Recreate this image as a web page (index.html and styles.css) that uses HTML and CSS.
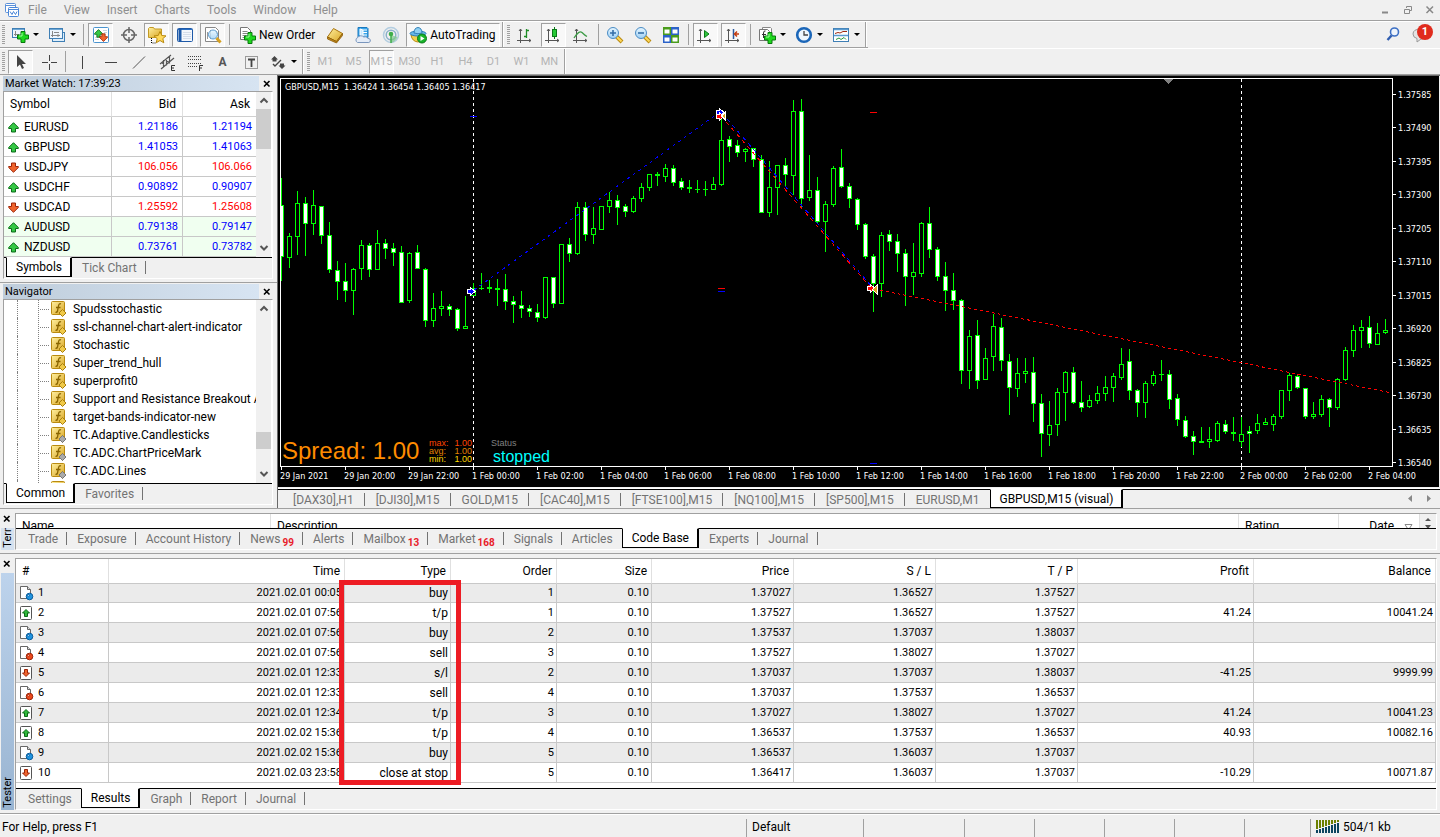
FILE: index.html
```html
<!DOCTYPE html>
<html lang="en">
  <head>
    <meta charset="UTF-8" />
    <meta name="viewport" content="width=device-width, initial-scale=1.0" />
    <title>GBPUSD,M15 (visual)</title>
    <link rel="stylesheet" href="styles.css">
  </head>
  <body>
    <!-- shared icons -->
    <svg class="sprite" width="0" height="0" aria-hidden="true">
      <defs>
        <linearGradient id="g-green" x1="0" y1="0" x2="0" y2="1"><stop offset="0" stop-color="#7dff7d" /><stop offset="1" stop-color="#0ca80c" /></linearGradient>
        <linearGradient id="g-gold" x1="0" y1="0" x2="1" y2="1"><stop offset="0" stop-color="#fff0a0" /><stop offset="1" stop-color="#d8a422" /></linearGradient>
        <linearGradient id="g-lens" x1="0" y1="0" x2="0" y2="1"><stop offset="0" stop-color="#e6f6ff" /><stop offset="1" stop-color="#9fd0f5" /></linearGradient>
      </defs>
      <symbol id="plus" viewBox="0 0 12 12"><path d="M4 .5h4v3.500h3.500v4h-3.500v3.500h-4v-3.500h-3.500v-4h3.500z" fill="#1fd81f" stroke="#08780d" /><path d="M5 2v3h-3" fill="none" stroke="#9dff9d" /></symbol>
      <symbol id="up" viewBox="0 0 11 11"><path d="M5.500 .7L10.300 5.500V6.500H7.500V10H3.500V6.500H.7V5.500z" fill="#35c845" stroke="#0a6b18" /></symbol>
      <symbol id="down" viewBox="0 0 11 11"><path d="M5.500 10.300L10.300 5.500V4.500H7.500V1H3.500V4.500H.7V5.500z" fill="#f0642c" stroke="#9c2408" /></symbol>
      <symbol id="fx" viewBox="0 0 16 16">
        <rect x=".5" y=".5" width="13" height="13" rx="1" fill="url(#g-gold)" stroke="#b98a10" />
        <path d="M10 3q-2-1-2.500 2l-1 5q-.3 1.500-2 1.300M5 6.500h4.500" fill="none" stroke="#8a6500" stroke-width="1.300" />
        <path class="gem" d="M11.500 8.500l3.500 3.500-3.500 3.500L8 12z" />
      </symbol>
      <symbol id="doc" viewBox="0 0 15 16">
        <path d="M1.500 1.500h7l3 3v9h-10z" fill="#fff" stroke="#666" /><path d="M8.500 1.500v3h3" fill="#ddd" stroke="#666" />
        <circle class="ball" cx="10.500" cy="11.500" r="3.300" /><circle cx="9.500" cy="10.500" r="1" fill="#fff" opacity=".6" />
      </symbol>
      <symbol id="box-up" viewBox="0 0 15 16"><rect x="1.500" y="1.500" width="11" height="13" rx="1" fill="#fff" stroke="#555" /><path d="M7 4.500l3.500 3.500H8.500v3.500h-3V8H3.500z" fill="#2fb83a" stroke="#0a6b18" /></symbol>
      <symbol id="box-down" viewBox="0 0 15 16"><rect x="1.500" y="1.500" width="11" height="13" rx="1" fill="#fff" stroke="#555" /><path d="M7 11.500L3.500 8h2V4.500h3V8h2z" fill="#f0642c" stroke="#9c2408" /></symbol>
      <symbol id="axes" viewBox="0 0 18 18"><path d="M4.500 3v14M1 14.500h14M3 5l1.500-2L6 5M13 13l2 1.500L13 16" fill="none" stroke="#555" /></symbol>
      <symbol id="x" viewBox="0 0 8 8"><path d="M1 1l5.500 5.500M6.500 1L1 6.500" stroke="#000" stroke-width="1.600" /></symbol>
      <symbol id="chev-up" viewBox="0 0 10 10"><path d="M1.500 6.500L5 3l3.500 3.500" fill="none" stroke="#555" stroke-width="2" /></symbol>
      <symbol id="chev-down" viewBox="0 0 10 10"><path d="M1.500 3L5 6.500 8.500 3" fill="none" stroke="#555" stroke-width="2" /></symbol>
    </svg>

    <header class="menubar">
      <svg class="logo" width="16" height="16" viewBox="0 0 16 16"><rect x="1.500" y="1.500" width="10" height="9" rx="1" fill="#fff" stroke="#5a8fd8" /><path d="M1 3.500h11" stroke="#5a8fd8" /><rect x="4.500" y="5.500" width="10" height="9" rx="1" fill="#fff" stroke="#4a86d8" /><path d="M4 7.500h11M6 9.500l2 3 1.500-3 2 3 1.500-3" fill="none" stroke="#4a86d8" /></svg>
      <nav class="menu">
        <button>File</button><button>View</button><button>Insert</button><button>Charts</button><button>Tools</button><button>Window</button><button>Help</button>
      </nav>
      <div class="window-buttons">
        <button aria-label="Minimize"><svg width="10" height="10" viewBox="0 0 10 10"><path d="M1 7.500h6" stroke="#888" stroke-width="2" /></svg></button>
        <button aria-label="Restore"><svg width="10" height="10" viewBox="0 0 10 10"><path d="M3.500 3V1.500h5v4H7M1.500 4.500h5v4h-5z" fill="none" stroke="#888" /></svg></button>
        <button aria-label="Close"><svg width="10" height="10" viewBox="0 0 10 10"><path d="M1.500 1.500l6.500 6.500M8 1.500L1.500 8" stroke="#888" stroke-width="1.500" /></svg></button>
      </div>
    </header>

    <div class="toolbar-row">
      <div class="toolbar">
        <span class="grip"></span>
        <button class="tool drop" aria-label="New chart"><svg width="18" height="18" viewBox="0 0 18 18"><rect x="1.500" y="2.500" width="12" height="9" fill="#eef6fd" stroke="#3f7fb5" /><path d="M2 3.500h11" stroke="#6fa8d6" /><path d="M4.500 5v5M3 8.500h5" stroke="#888" /><use href="#plus" x="6" y="5" width="12" height="12" /></svg><i></i></button>
        <button class="tool drop" aria-label="Profiles"><svg width="18" height="18" viewBox="0 0 18 18"><rect x="4.500" y="6.500" width="12" height="9" fill="#dfeefa" stroke="#3f7fb5" /><rect x="1.500" y="2.500" width="13" height="10" fill="#eef6fd" stroke="#3f7fb5" /><path d="M2 3.500h12" stroke="#6fa8d6" /><path d="M4.500 5v6M3 9.500h9M10 8v3M6 6.500h5" stroke="#888" /></svg><i></i></button>
        <span class="sep"></span>
        <button class="tool on" aria-label="Market Watch"><svg width="18" height="18" viewBox="0 0 18 18"><rect x="1.500" y="1.500" width="15" height="15" rx="1" fill="#fff" stroke="#4a94cf" /><path d="M11 4.500h4M12 6.500h3M3 11.500h4M3 13.500h4" stroke="#cdd6dd" /><use href="#up" x="2" y="3" width="9" height="9" /><use href="#down" x="7" y="7" width="9" height="9" /></svg></button>
        <button class="tool" aria-label="Data Window"><svg width="18" height="18" viewBox="0 0 18 18"><circle cx="9" cy="9" r="5.500" fill="none" stroke="#666" stroke-width="1.500" /><path d="M9 1v6M9 11v6M1 9h6M11 9h6" stroke="#666" stroke-width="1.500" /></svg></button>
        <button class="tool on" aria-label="Navigator"><svg width="20" height="18" viewBox="0 0 20 18"><path d="M1.500 11.500v-9l1-1h4l1 1.500h7v8.500z" fill="url(#g-gold)" stroke="#c39a24" /><path d="M4.500 12v5h4" fill="none" stroke="#000" stroke-dasharray="1 1" /><path d="M13 5.500l1.800 4 4.200.4-3.200 2.700 1 4.200-3.800-2.300-3.800 2.300 1-4.200L7 9.900l4.200-.4z" fill="#ffd95a" stroke="#b98a10" /></svg></button>
        <button class="tool on" aria-label="Terminal"><svg width="18" height="18" viewBox="0 0 18 18"><rect x="1.500" y="2.500" width="15" height="13" rx="1" fill="#f4f7fc" stroke="#1f5aa8" /><path d="M2 3.500h14" stroke="#2a6fc4" stroke-width="1" /><path d="M4 3v12" stroke="#1f5aa8" stroke-width="3" /><path d="M7 6.500h8M7 8.500h8M7 10.500h8M7 12.500h8" stroke="#d6deea" /></svg></button>
        <button class="tool on" aria-label="Strategy Tester"><svg width="18" height="18" viewBox="0 0 18 18"><path d="M1.500 1.500h10l3 3v11h-13z" fill="#fff" stroke="#888" /><path d="M3.500 13V6M6.500 13V4M12.500 8V5" stroke="#999" /><circle cx="9" cy="8.500" r="4.500" fill="url(#g-lens)" fill-opacity=".8" stroke="#5b9bd0" /><path d="M12.500 12l4 4.500" stroke="#d5a021" stroke-width="3" /></svg></button>
        <span class="sep"></span>
        <button class="tool text-tool"><svg width="18" height="18" viewBox="0 0 18 18"><path d="M2.500 1.500h7l3 3v9h-10z" fill="#fff" stroke="#777" /><path d="M4.500 5.500h5M4.500 7.500h6M4.500 9.500h4M4.500 11.500h3" stroke="#888" /><use href="#plus" x="6" y="6" width="12" height="12" /></svg>New Order</button>
        <button class="tool" aria-label="MetaEditor"><svg width="18" height="18" viewBox="0 0 18 18"><path d="M1.500 11l6-8.500 9 5-6 8z" fill="url(#g-gold)" stroke="#a87410" /><path d="M1.500 11v2l9 4 6-7.500v-2l-6 8z" fill="#c48a18" stroke="#8a5a08" stroke-width=".8" /></svg></button>
        <button class="tool" aria-label="MQL5 community"><svg width="18" height="18" viewBox="0 0 18 18"><path d="M4 1.500h9l1 1v9H4z" fill="#38a4ea" stroke="#1a78bd" /><path d="M6 3l3 1v6l-3-1zM9 4h4M9 6.500h4M9 9h4" fill="#c9e9ff" stroke="#fff" /><path d="M3.500 16.500a2.700 2.700 0 0 1 .3-5 3.500 3 0 0 1 6-.5 3 3 0 0 1 4 1.500 2 2 0 0 1 1 4z" fill="#e4ecf7" stroke="#7a96bd" /></svg></button>
        <button class="tool" aria-label="Signals"><svg width="18" height="18" viewBox="0 0 18 18"><circle cx="9" cy="9" r="7.500" fill="none" stroke="#b3cde0" stroke-width="1.500" /><circle cx="9" cy="9" r="4.800" fill="none" stroke="#8bb0c9" stroke-width="1.500" /><path d="M9 9v8q5-2 6.500-6" fill="#7cc88a" opacity=".7" /><circle cx="9" cy="8" r="2.300" fill="#3fae49" /><path d="M9 9v8" stroke="#3fae49" stroke-width="1.500" /></svg></button>
        <button class="tool text-tool auto on"><svg width="19" height="18" viewBox="0 0 19 18"><path d="M2 9q1 6.500 7 7 6-.5 7-7z" fill="#f2cf4e" stroke="#b98a10" /><ellipse cx="9" cy="7.500" rx="8" ry="2.500" fill="#67b7e8" stroke="#2f80b8" /><path d="M5 7q0-5 4-5.500 4 .5 4 5.500-4 1.500-8 0z" fill="#8fd0f2" stroke="#2f80b8" /><circle cx="13" cy="12.500" r="4.500" fill="#18b42a" stroke="#0a7a18" /><path d="M11.500 10v5l4-2.500z" fill="#fff" /></svg>AutoTrading</button>
        <span class="edge"></span>
      </div>
      <div class="toolbar">
        <span class="grip"></span>
        <button class="tool" aria-label="Bar Chart"><svg width="18" height="18" viewBox="0 0 18 18"><use href="#axes" width="18" height="18" /><path d="M10.500 3v9M10 4.500h3M8 10.500h3" stroke="#1d8c25" stroke-width="1.300" /></svg></button>
        <button class="tool on" aria-label="Candlesticks"><svg width="18" height="18" viewBox="0 0 18 18"><use href="#axes" width="18" height="18" /><path d="M10.500 1v12" stroke="#0a7a18" /><rect x="8.500" y="3.500" width="4" height="7" fill="#25c935" stroke="#0a7a18" /></svg></button>
        <button class="tool" aria-label="Line Chart"><svg width="18" height="18" viewBox="0 0 18 18"><use href="#axes" width="18" height="18" /><path d="M2 12q5-8 8-5.500 3 3 5 4" fill="none" stroke="#3d9b46" stroke-width="1.300" /></svg></button>
        <span class="sep"></span>
        <button class="tool" aria-label="Zoom In"><svg width="18" height="18" viewBox="0 0 18 18"><path d="M10.500 10.500l5.500 5.500" stroke="#b98a10" stroke-width="4" /><path d="M11 11l4.500 4.500" stroke="#ffd95a" stroke-width="2" /><circle cx="7" cy="7" r="5.500" fill="url(#g-lens)" stroke="#4a8cc4" /><path d="M4 7h6M7 4v6" stroke="#356fa8" stroke-width="1.600" /></svg></button>
        <button class="tool" aria-label="Zoom Out"><svg width="18" height="18" viewBox="0 0 18 18"><path d="M10.500 10.500l5.500 5.500" stroke="#b98a10" stroke-width="4" /><path d="M11 11l4.500 4.500" stroke="#ffd95a" stroke-width="2" /><circle cx="7" cy="7" r="5.500" fill="url(#g-lens)" stroke="#4a8cc4" /><path d="M4 7h6" stroke="#356fa8" stroke-width="1.600" /></svg></button>
        <button class="tool" aria-label="Tile Windows"><svg width="18" height="18" viewBox="0 0 18 18"><path d="M1 1h8v8H1zM9 9h8v8H9z" fill="#4a9c1c" /><path d="M9 1h8v8H9zM1 9h8v8H1z" fill="#2b62c9" /><path d="M2.500 3.500h5v4h-5zM10.500 3.500h5v4h-5zM2.500 11.500h5v4h-5zM10.500 11.500h5v4h-5z" fill="#fff" /></svg></button>
        <span class="sep"></span>
        <button class="tool on" aria-label="Auto Scroll"><svg width="18" height="18" viewBox="0 0 18 18"><use href="#axes" width="18" height="18" /><path d="M8.500 4.500v7L13 8z" fill="#2fc43c" stroke="#0a7a18" /></svg></button>
        <button class="tool on" aria-label="Chart Shift"><svg width="18" height="18" viewBox="0 0 18 18"><use href="#axes" width="18" height="18" /><path d="M9.500 3v10" stroke="#2b5aa0" stroke-width="1.500" /><path d="M10 8h5M13 5.500L10.500 8 13 10.500" fill="none" stroke="#c33c10" stroke-width="1.500" /></svg></button>
        <span class="sep"></span>
        <button class="tool drop" aria-label="Indicators"><svg width="18" height="18" viewBox="0 0 18 18"><path d="M4.500 1.500h8l1 1v9h-9z" fill="#fff" stroke="#888" /><path d="M1.500 3.500h8l2 2v9h-10z" fill="#fff" stroke="#777" /><path d="M7.500 5q-2-.5-2 2v5M4 8.500h4" fill="none" stroke="#333" /><use href="#plus" x="6" y="6" width="12" height="12" /></svg><i></i></button>
        <button class="tool drop" aria-label="Periods"><svg width="18" height="18" viewBox="0 0 18 18"><circle cx="9" cy="9" r="6.800" fill="#eef6fd" stroke="#1b66b8" stroke-width="2.600" /><path d="M9 5v4h4" fill="none" stroke="#444" stroke-width="1.300" /></svg><i></i></button>
        <button class="tool drop" aria-label="Templates"><svg width="18" height="18" viewBox="0 0 18 18"><rect x="1.500" y="2.500" width="15" height="13" fill="#fff" stroke="#3f7fb5" /><path d="M2 3.500h14M2 9.500h14" stroke="#5b9bd0" stroke-width="1.500" /><path d="M3 7.500l3-1 2 .5 3-1.500h4" fill="none" stroke="#a02a10" /><path d="M4 13.500l3-1.500 2 1.500 3-2 2 2" fill="none" stroke="#2a9a3a" /></svg><i></i></button>
        <span class="edge"></span>
      </div>
      <div class="toolbar-right">
        <button class="tool" aria-label="Search"><svg width="18" height="18" viewBox="0 0 18 18"><circle cx="10.500" cy="7" r="4" fill="#eef4fc" stroke="#3c6fc4" stroke-width="1.600" /><path d="M7.500 10.500L3.500 15" stroke="#2f5db0" stroke-width="2.400" /></svg></button>
        <button class="tool alert" aria-label="Notifications"><svg width="20" height="18" viewBox="0 0 20 18"><path d="M2 9q0-5 8-5t8 5-8 5l-4 3v-3.500Q2 12.500 2 9z" fill="#e4e4e4" stroke="#999" /></svg><b>1</b></button>
      </div>
    </div>

    <div class="toolbar-row second">
      <div class="toolbar">
        <span class="grip"></span>
        <button class="tool on" aria-label="Cursor"><svg width="18" height="18" viewBox="0 0 18 18"><path d="M5 2v12l3-2.500L10 16l2-1-2-4h4z" fill="#444" /></svg></button>
        <button class="tool" aria-label="Crosshair"><svg width="18" height="18" viewBox="0 0 18 18"><path d="M9.500 2v6M9.500 11v6M2 9.500h6M11 9.500h6" stroke="#444" /></svg></button>
        <span class="sep"></span>
        <button class="tool" aria-label="Vertical Line"><svg width="18" height="18" viewBox="0 0 18 18"><path d="M8.500 3v13" stroke="#444" /></svg></button>
        <button class="tool" aria-label="Horizontal Line"><svg width="18" height="18" viewBox="0 0 18 18"><path d="M3 9.500h12" stroke="#444" /></svg></button>
        <button class="tool" aria-label="Trendline"><svg width="18" height="18" viewBox="0 0 18 18"><path d="M3 15.500L15 3.500" stroke="#555" /></svg></button>
        <button class="tool" aria-label="Equidistant Channel"><svg width="18" height="18" viewBox="0 0 18 18"><path d="M2 11L13 2M3 16L16 5M5.500 7v8M8.500 5.500v7M11.500 3.500v7M4 10l2 1M8 8l3 1" fill="none" stroke="#555" stroke-width="1.200" /><path d="M17 12.500h-3.500v5H17M13.500 15H16" fill="none" stroke="#333" /></svg></button>
        <button class="tool" aria-label="Fibonacci"><svg width="18" height="18" viewBox="0 0 18 18"><path d="M2 3.500h14M2 6.500h14M2 10.500h14M2 13.500h10" stroke="#444" stroke-dasharray="1 1" /><path d="M17 12.500h-3.500v5.500M13.500 15H16" fill="none" stroke="#333" /></svg></button>
        <button class="tool glyph">A</button>
        <button class="tool" aria-label="Text Label"><svg width="18" height="18" viewBox="0 0 18 18"><rect x="3.500" y="3.500" width="12" height="12" fill="none" stroke="#444" stroke-dasharray="1 1" /><path d="M6 6.500h7M9.500 6v8" stroke="#444" stroke-width="1.800" /></svg></button>
        <button class="tool drop" aria-label="Arrows"><svg width="18" height="18" viewBox="0 0 18 18"><path d="M5.500 3l3.500 3.500H7.500V8.500h-4v-2H2zM13 16l-3.500-3.500H11v-2h4v2h1.500z" fill="#444" /><path d="M4 11l2 2 6-6" fill="none" stroke="#444" stroke-width="1.400" /></svg><i></i></button>
        <span class="edge"></span>
      </div>
      <div class="toolbar periods">
        <span class="grip"></span>
        <button class="tool">M1</button><button class="tool">M5</button><button class="tool on">M15</button><button class="tool">M30</button><button class="tool">H1</button><button class="tool">H4</button><button class="tool">D1</button><button class="tool">W1</button><button class="tool">MN</button>
        <span class="edge"></span>
      </div>
    </div>

    <main class="workspace">
      <aside class="dock">
        <section class="panel">
          <div class="panel-title"><h2>Market Watch: 17:39:23</h2><button aria-label="Close Market Watch"><svg width="8" height="8"><use href="#x" /></svg></button></div>
          <div class="panel-box">
            <div class="panel-scroll">
              <table class="quotes">
                <thead><tr><th class="symbol">Symbol</th><th class="bid">Bid</th><th>Ask</th></tr></thead>
                <tbody id="quotes"></tbody>
              </table>
              <div class="scrollbar"><svg width="10" height="10"><use href="#chev-up" /></svg><span class="thumb tall"></span><svg class="last" width="10" height="10"><use href="#chev-down" /></svg></div>
            </div>
            <nav class="tabs"><button class="tab active">Symbols</button><button class="tab">Tick Chart</button></nav>
          </div>
        </section>
        <section class="panel navigator">
          <div class="panel-title"><h2>Navigator</h2><button aria-label="Close Navigator"><svg width="8" height="8"><use href="#x" /></svg></button></div>
          <div class="panel-box">
            <div class="panel-scroll">
              <ul class="tree" id="tree"></ul>
              <div class="scrollbar"><svg width="10" height="10"><use href="#chev-up" /></svg><span class="thumb low"></span><svg class="last" width="10" height="10"><use href="#chev-down" /></svg></div>
            </div>
            <nav class="tabs"><button class="tab active">Common</button><button class="tab">Favorites</button></nav>
          </div>
        </section>
      </aside>

      <section class="charts">
        <div class="chart">
          <div class="plot">
            <svg id="plot" width="1111" height="387" viewBox="281 79 1111 387" shape-rendering="crispEdges"></svg>
            <p class="chart-title">GBPUSD,M15&nbsp; 1.36424 1.36454 1.36405 1.36417</p>
            <div class="overlay">
              <p class="spread">Spread: 1.00</p>
              <dl class="spread-stats">
                <div class="max"><dt>max:</dt><dd>1.00</dd></div>
                <div class="avg"><dt>avg:</dt><dd>1.00</dd></div>
                <div class="min"><dt>min:</dt><dd>1.00</dd></div>
              </dl>
              <div class="status-label"><span>Status</span><b>stopped</b></div>
            </div>
          </div>
          <div class="price-axis" id="prices"></div>
          <div class="time-axis" id="times"></div>
        </div>
        <nav class="tabs chart-tabs">
          <button class="tab">[DAX30],H1</button><button class="tab">[DJI30],M15</button><button class="tab">GOLD,M15</button><button class="tab">[CAC40],M15</button><button class="tab">[FTSE100],M15</button><button class="tab">[NQ100],M15</button><button class="tab">[SP500],M15</button><button class="tab">EURUSD,M1</button><button class="tab active">GBPUSD,M15 (visual)</button>
          <span class="tab-scroll"><svg width="30" height="9" viewBox="0 0 30 9"><path d="M6 1v7L2 4.500zM21 1v7l4-3.500z" fill="#888" /></svg></span>
        </nav>
      </section>
    </main>

    <section class="bottom terminal">
      <div class="side"><button aria-label="Close Terminal"><svg width="8" height="8"><use href="#x" /></svg></button><h2><span>Terminal</span></h2></div>
      <div class="bottom-box">
        <div class="code-head">
          <span class="c-name">Name</span><span class="c-desc">Description</span><span class="c-rating">Rating</span><span class="c-date">Date <svg width="9" height="8" viewBox="0 0 9 8"><path d="M1 1.500h7L4.500 7z" fill="none" stroke="#888" /></svg></span><span class="c-scroll"><svg width="10" height="12" viewBox="0 0 10 12"><path d="M5 1l3 3H2zM2 8h6l-3 4z" fill="#555" /></svg></span>
        </div>
        <nav class="tabs">
          <button class="tab">Trade</button><button class="tab">Exposure</button><button class="tab">Account History</button><button class="tab">News<sub>99</sub></button><button class="tab">Alerts</button><button class="tab">Mailbox<sub>13</sub></button><button class="tab">Market<sub>168</sub></button><button class="tab">Signals</button><button class="tab">Articles</button><button class="tab active">Code Base</button><button class="tab">Experts</button><button class="tab">Journal</button>
        </nav>
      </div>
    </section>

    <section class="bottom tester">
      <div class="side"><button aria-label="Close Tester"><svg width="8" height="8"><use href="#x" /></svg></button><h2><span>Tester</span></h2></div>
      <div class="bottom-box">
        <div class="results-wrap">
          <table class="results">
            <colgroup><col class="w-num"><col class="w-time"><col class="w-type"><col class="w-type"><col class="w-size"><col class="w-price"><col class="w-price"><col class="w-price"><col class="w-profit"><col></colgroup>
            <thead><tr><th class="num">#</th><th>Time</th><th>Type</th><th>Order</th><th>Size</th><th>Price</th><th>S / L</th><th>T / P</th><th>Profit</th><th>Balance</th></tr></thead>
            <tbody id="results"></tbody>
          </table>
          <div class="highlight"></div>
        </div>
        <nav class="tabs">
          <button class="tab">Settings</button><button class="tab active">Results</button><button class="tab">Graph</button><button class="tab">Report</button><button class="tab">Journal</button>
        </nav>
      </div>
    </section>

    <footer class="statusbar">
      <span class="help">For Help, press F1</span>
      <span class="s-117">Default</span><span class="s-102"></span><span class="s-70"></span><span class="s-70"></span><span class="s-70"></span><span class="s-70"></span><span class="s-66"></span>
      <span class="traffic"><svg width="24" height="14" id="signal"></svg>504/1 kb</span>
    </footer>
    <script src="script.js"></script>
  </body>
</html>
```

FILE: styles.css
```css
* {
  box-sizing: border-box;
}
body {
  margin: 0;
  min-height: 100vh;
  background: #f0f0f0;
  color: #000;
  font: 12px/16px Roboto, "Noto Sans", sans-serif;
  overflow: hidden;
}
button {
  border: 0;
  padding: 0;
  margin: 0;
  background: none;
  font: inherit;
  color: inherit;
}
svg {
  display: block;
}
h2, p, ul, dl, dd {
  margin: 0;
  padding: 0;
  font-size: inherit;
  font-weight: normal;
  list-style: none;
}
.sprite {
  position: absolute;
}

/* menu */
.menubar {
  display: flex;
  align-items: center;
  height: 21px;
  padding: 0 0 0 4px;
  border-bottom: 1px solid #a0a0a0;
}
.menu {
  display: flex;
  flex: 1;
}
.menu button {
  padding: 0 9px 0 8px;
  color: #8f8f8f;
}
.window-buttons {
  display: flex;
  gap: 2px;
}
.window-buttons button {
  display: grid;
  place-items: center;
  width: 20px;
  height: 17px;
}

/* toolbars */
.toolbar-row {
  display: flex;
  height: 27px;
  border-top: 1px solid #fff;
}
.toolbar {
  display: flex;
  align-items: center;
  border-bottom: 1px solid #a0a0a0;
}
.second {
  border-bottom: 1px solid #a0a0a0;
}
.second .toolbar {
  border: 0;
}
.grip {
  width: 3px;
  height: 20px;
  margin: 0 3px 0 2px;
  background: repeating-linear-gradient(#a0a0a0 0 1px, #f0f0f0 1px 2px);
}
.tool {
  display: flex;
  align-items: center;
  justify-content: center;
  width: 25px;
  height: 24px;
  margin-right: 3px;
}
.tool.on {
  background: #f8f8f8;
  border: 1px solid #a0a0a0;
  border-right-color: #fff;
  border-bottom-color: #fff;
}
.tool.drop {
  width: 34px;
  gap: 4px;
}
.tool.drop i {
  border: 3px solid transparent;
  border-top-color: #000;
  border-bottom: 0;
}
.tool.text-tool {
  width: auto;
  gap: 3px;
  padding: 0 4px;
}
.tool.auto {
  gap: 2px;
  padding: 0 3px 0 2px;
}
.sep {
  width: 1px;
  height: 21px;
  background: #a0a0a0;
  margin: 0 4px 0 1px;
}
.edge {
  align-self: stretch;
  width: 2px;
  background: #a0a0a0;
  border-right: 1px solid #fff;
  margin: 0 1px 0 -1px;
}
.glyph {
  font-size: 12px;
  font-weight: bold;
  color: #555;
}
.periods {
  color: #b4b4b4;
  font-size: 11px;
}
.toolbar-right {
  display: flex;
  margin-left: auto;
  padding-right: 4px;
}
.alert {
  position: relative;
}
.alert b {
  position: absolute;
  right: 0;
  top: 2px;
  width: 16px;
  height: 16px;
  border-radius: 8px;
  background: #e02b1d;
  color: #fff;
  font-size: 11px;
  line-height: 16px;
}

/* docked panels */
.workspace {
  display: grid;
  grid-template-columns: 277px minmax(0, 1fr);
  border-bottom: 1px solid #a0a0a0;
}
.panel {
  padding: 1px 4px 3px 3px;
  border-bottom: 1px solid #a0a0a0;
}
.navigator {
  border-bottom: 0;
}
.panel-title {
  display: flex;
  align-items: center;
  height: 15px;
}
.panel-title h2 {
  flex: 1;
  padding-left: 2px;
  background: linear-gradient(90deg, #bfcddb, #d7e4f2);
  font-size: 11px;
  line-height: 15px;
}
.panel-title button {
  padding-left: 4px;
  padding-right: 2px;
}
.panel-box {
  border: 1px solid #a0a0a0;
  border-right-color: #fff;
  border-bottom-color: #fff;
}
.panel-scroll {
  display: flex;
  padding-right: 1px;
  background: #fff;
  height: 165px;
  overflow: hidden;
}
.navigator .panel-scroll {
  height: 183px;
}
.scrollbar {
  display: flex;
  flex-direction: column;
  align-items: center;
  width: 15px;
  padding: 4px 0;
  background: #f0f0f0;
}
.scrollbar .last {
  margin-top: auto;
}
.thumb {
  width: 15px;
  background: #cdcdcd;
}
.thumb.tall {
  height: 40px;
  margin-top: 3px;
}
.thumb.low {
  height: 17px;
  margin-top: 118px;
}
.quotes {
  flex: 1;
  border-collapse: separate;
  border-spacing: 0;
  table-layout: fixed;
}
.quotes th {
  height: 25px;
  padding: 0 6px 0 4px;
  font-weight: normal;
  text-align: right;
  border-bottom: 1px solid #d0d0d0;
  border-left: 1px solid #e0e0e0;
}
.quotes th.symbol {
  width: 107px;
  padding-left: 6px;
  text-align: left;
  border-left: 0;
}
.quotes th.bid {
  width: 71px;
}
.quotes td {
  height: 20px;
  padding: 0 4px 0 3px;
  text-align: right;
  font-size: 11px;
  line-height: 18px;
  color: #0000ff;
  border-bottom: 1px solid #c8c8c8;
  border-left: 1px solid #c8c8c8;
}
.quotes td.name {
  padding-left: 4px;
  text-align: left;
  font-size: 12px;
  color: #000;
  border-left: 0;
}
.name svg {
  display: inline-block;
  vertical-align: -2px;
  margin-right: 5px;
}
.quotes tr.falling td {
  color: #ff0000;
}
.quotes tr.falling td.name {
  color: #000;
}
.quotes tr.fresh {
  background: #f0fff0;
}
.tree {
  flex: 1;
  overflow: hidden;
  padding-left: 13px;
}
.tree li {
  display: flex;
  align-items: center;
  height: 18px;
  padding-left: 33px;
  white-space: nowrap;
  border-left: 1px dotted #808080;
  background: repeating-linear-gradient(#808080 0 1px, #fff 1px 2px) 20px 0 / 1px 100% no-repeat, repeating-linear-gradient(90deg, #808080 0 1px, #fff 1px 2px) 20px 9px / 12px 1px no-repeat;
}
.tree svg {
  flex: none;
  margin-right: 6px;
  width: 16px;
  height: 16px;
}
.gem {
  fill: #f0c948;
  stroke: #a87f10;
}
.tree .gem-over {
  fill: #aaa;
  stroke: #777;
}

/* tabs */
.tabs {
  display: flex;
  align-items: flex-start;
  height: 21px;
  padding-left: 2px;
  border-top: 1px solid #000;
}
.tab {
  position: relative;
  height: 19px;
  padding: 0 9px 0 10px;
  color: #737373;
  line-height: 18px;
  white-space: nowrap;
}
.tab:not(.active)::after {
  content: "";
  position: absolute;
  right: 0;
  top: 3px;
  height: 13px;
  border-right: 1px solid #737373;
}
.tab:has(+ .active)::after {
  display: none;
}
.tab.active {
  margin-top: -1px;
  height: 20px;
  padding: 0 8px 0 9px;
  color: #000;
  background: #fff;
  border: 1px solid #000;
  border-top-color: #fff;
  border-right-width: 2px;
}
.tab sub {
  margin-left: 2px;
  color: #e8202a;
  font-size: 10px;
  font-weight: bold;
  line-height: 0;
}
.chart-tabs {
  padding-left: 4px;
  box-shadow: 0 -1px #fff;
  height: 19px;
  margin-top: 2px;
}
.chart-tabs .tab {
  padding: 0 11px;
}
.chart-tabs .tab.active {
  padding: 0 8px;
  height: 19px;
}
.tab-scroll {
  margin-left: auto;
  padding: 4px 4px 0 0;
}

/* chart */
.charts {
  border-top: 1px solid #696969;
  border-left: 1px solid #696969;
}
.chart {
  display: grid;
  grid-template-columns: minmax(0, 1fr) 46px;
  margin-right: 1px;
  padding: 2px 0 0 2px;
  background: #000;
  color: #fff;
  font: 9px/12px "DejaVu Sans Condensed", "DejaVu Sans", sans-serif;
}
.plot {
  position: relative;
  overflow: hidden;
  height: 389px;
  border: 1px solid #fff;
}
.chart-title {
  position: absolute;
  left: 4px;
  top: 2px;
}
.overlay {
  position: absolute;
  left: 1px;
  bottom: 0;
  display: flex;
  align-items: flex-end;
  font-family: "Liberation Sans", Arial, sans-serif;
}
.spread {
  width: 147px;
  font-size: 24px;
  line-height: 30px;
  color: #ff8c00;
}
.spread-stats {
  width: 43px;
  font-size: 9px;
  line-height: 8px;
  padding-bottom: 3px;
}
.spread-stats div {
  display: flex;
  justify-content: space-between;
}
.max {
  color: #ff4500;
}
.avg {
  color: #e08000;
}
.min {
  color: #ffd700;
}
.status-label {
  padding-left: 19px;
  font-size: 9px;
  line-height: 10px;
  color: #808080;
}
.status-label b {
  display: block;
  padding-left: 2px;
  font-size: 16px;
  line-height: 18px;
  font-weight: normal;
  color: #00ffff;
}
.price-axis {
  display: flex;
  flex-direction: column;
  justify-content: space-between;
  padding: 11px 0 0 0;
  margin-bottom: -2px;
}
.price-axis span::before {
  content: "";
  display: inline-block;
  width: 3px;
  margin-right: 2px;
  border-top: 1px solid #fff;
  vertical-align: 3px;
}
.time-axis {
  grid-column: 1 / 3;
  display: flex;
  height: 20px;
  overflow: hidden;
}
.time-axis span {
  flex: none;
  width: 64px;
  white-space: nowrap;
}
.time-axis span::before {
  content: "";
  display: block;
  width: 1px;
  height: 3px;
  margin-left: 1px;
  background: #fff;
}

/* terminal and tester */
.bottom {
  display: grid;
  grid-template-columns: 15px minmax(0, 1fr);
  padding: 4px 3px 3px 0;
  border-bottom: 1px solid #a0a0a0;
}
.side {
  display: flex;
  flex-direction: column;
  padding: 2px 1px 0 1px;
}
.side button {
  padding: 0 0 5px 2px;
}
.side h2 {
  flex: 1 1 0;
  min-height: 0;
  overflow: hidden;
  display: flex;
  align-items: flex-end;
  background: linear-gradient(#bdd3ec, #99b4d1);
}
.terminal .side h2 {
  background: #d5e1ef;
}
.side h2 span {
  writing-mode: vertical-rl;
  transform: rotate(180deg);
  font-size: 11px;
  line-height: 13px;
  padding-top: 2px;
}
.bottom-box {
  border: 1px solid #a0a0a0;
  border-right-color: #fff;
  border-bottom-color: #fff;
  min-width: 0;
}
.code-head {
  display: flex;
  height: 14px;
  overflow: hidden;
  background: #fff;
}
.code-head span {
  flex: none;
  padding: 4px 6px 0;
  border-left: 1px solid #e0e0e0;
  height: 24px;
}
.code-head .c-name {
  width: 254px;
  border-left: 0;
}
.code-head .c-desc {
  flex: 1;
}
.code-head .c-rating {
  width: 100px;
}
.code-head .c-date {
  display: flex;
  justify-content: flex-end;
  gap: 10px;
  width: 81px;
}
.c-date svg {
  margin-top: 5px;
}
.code-head .c-scroll {
  width: 17px;
  padding: 3px;
  background: #f0f0f0;
}
.results-wrap {
  position: relative;
  background: #fff;
  padding-bottom: 5px;
}
.results {
  width: 100%;
  table-layout: fixed;
  border-collapse: separate;
  border-spacing: 0;
}
.w-num {
  width: 93px;
}
.w-time {
  width: 236px;
}
.w-type {
  width: 106px;
}
.w-size {
  width: 95px;
}
.w-price {
  width: 142px;
}
.w-profit {
  width: 176px;
}
.results th {
  height: 25px;
  padding: 0 4px 0 0;
  font-weight: normal;
  text-align: right;
  border-bottom: 1px solid #c8c8c8;
  border-right: 1px solid #e0e0e0;
}
.results th.num {
  padding-left: 6px;
  text-align: left;
}
.results td {
  height: 20px;
  padding: 0 2px 0 0;
  text-align: right;
  font-size: 11px;
  line-height: 18px;
  border-bottom: 1px solid #c8c8c8;
  border-right: 1px solid #c8c8c8;
}
.results tr:first-child td {
  height: 19px;
}
.results tbody tr:nth-child(odd) {
  background: #ebebeb;
}
.results .type {
  font-size: 12px;
}
.results .id {
  display: flex;
  align-items: center;
  gap: 4px;
  padding-left: 3px;
}
.buy .ball, .buy {
  fill: #1f94e0;
  stroke: #0a5c9c;
}
.sell .ball, .sell {
  fill: #ee4a1c;
  stroke: #9c2408;
}
.highlight {
  position: absolute;
  left: 323px;
  top: 21px;
  width: 122px;
  height: 205px;
  border: 5px solid #ed1c24;
}

/* status bar */
.statusbar {
  display: flex;
  height: 23px;
  padding-top: 4px;
  border-top: 1px solid #fff;
}
.statusbar span {
  height: 19px;
  padding-left: 5px;
  line-height: 17px;
  border-left: 1px solid #a0a0a0;
}
.statusbar .help {
  flex: 1;
  padding-left: 2px;
  border-left: 0;
}
.s-117 { width: 117px; }
.s-102 { width: 101px; }
.s-70 { width: 70px; }
.s-66 { width: 66px; }
.statusbar .traffic {
  display: flex;
  align-items: flex-start;
  gap: 3px;
  width: 130px;
}
.traffic svg {
  margin-top: 1px;
}
```

FILE: script.js
```javascript
// candles: [high, body top, body bottom, low, filled], one every 8px
const candles = [
  [178,205,257,281,1],[233,236,258,268,0],[191,203,237,255,0],[197,203,224,256,1],[190,205,224,235,0],[206,206,236,244,1],[222,235,270,273,1],[261,270,282,300,1],
  [263,281,291,302,1],[268,269,291,315,0],[240,245,269,280,0],[243,245,270,277,1],[230,243,270,270,0],[239,243,249,259,1],[243,248,253,266,1],[246,252,303,303,1],
  [252,253,301,303,0],[245,252,269,269,1],[268,269,321,327,1],[293,308,321,327,0],[291,306,309,316,0],[304,306,310,316,1],[308,309,329,331,1],[296,326,329,329,0],
  [283,288,296,296,0],[273,288,289,290,0],[280,287,289,293,0],[279,288,290,306,0],[274,289,302,310,1],[296,301,305,323,1],[291,305,309,318,1],[305,308,312,317,1],
  [304,312,318,322,1],[277,277,318,319,0],[277,277,304,308,1],[244,244,304,304,0],[238,244,254,262,1],[202,207,254,255,0],[202,207,235,241,1],[207,228,235,244,0],
  [206,206,230,230,0],[192,200,207,213,0],[195,200,208,225,1],[204,206,212,217,1],[196,198,212,213,0],[183,187,199,202,0],[174,174,188,191,0],[172,174,176,186,0],
  [164,168,177,182,0],[165,168,183,186,1],[178,181,188,190,1],[180,187,189,193,0],[180,189,190,193,0],[181,189,190,196,0],[177,184,190,190,0],[116,140,185,186,0],
  [136,139,147,162,1],[140,145,153,157,1],[148,149,152,162,0],[148,148,160,167,1],[155,159,213,213,1],[161,187,213,217,0],[165,165,188,215,0],[158,165,175,187,1],
  [100,111,176,195,0],[99,111,199,208,1],[155,190,198,201,0],[177,190,222,223,1],[201,204,222,252,0],[166,168,205,207,0],[149,167,187,188,1],[183,186,199,208,1],
  [198,199,225,230,1],[223,224,257,259,1],[254,256,284,312,1],[232,235,284,297,0],[230,234,242,251,1],[234,241,254,272,1],[249,253,277,306,1],[243,272,277,295,0],
  [222,223,274,277,0],[207,223,250,258,1],[247,249,277,281,1],[262,276,291,311,1],[273,290,301,310,1],[299,300,371,384,1],[330,336,371,389,0],[320,335,381,389,1],
  [348,358,380,380,0],[314,326,357,371,0],[318,327,361,371,1],[354,361,388,415,1],[358,373,389,397,0],[358,371,374,383,0],[357,372,404,422,1],[394,403,434,457,1],
  [401,425,435,446,0],[388,392,425,436,0],[371,372,393,421,0],[367,372,403,404,1],[381,402,408,412,1],[395,400,407,408,0],[386,393,401,404,0],[376,387,394,401,0],
  [373,376,388,402,0],[348,364,378,380,0],[349,361,391,400,1],[389,390,403,417,1],[381,383,403,418,0],[371,375,384,386,0],[360,374,375,381,0],[370,374,400,409,1],
  [394,398,420,426,1],[416,420,437,438,1],[431,436,442,455,1],[427,441,443,443,0],[427,439,442,448,0],[421,423,441,442,0],[420,424,432,434,1],[417,432,434,441,0],
  [417,434,442,447,0],[426,431,434,453,1],[414,423,431,434,0],[418,422,425,425,0],[414,416,425,431,0],[390,390,417,419,0],[373,375,391,401,0],[374,376,388,389,1],
  [388,388,417,419,1],[402,414,417,419,0],[395,399,415,417,0],[398,399,408,427,1],[378,379,408,410,0],[347,350,380,381,0],[325,330,351,357,0],[320,327,331,348,0],
  [316,327,344,348,1],[323,333,345,345,0],[319,330,333,334,0]
];

let plot = "";
// day separators
[473, 1241].forEach((x) => {
  plot += `<path d="M${x}.5 79V466" stroke="#fff" stroke-dasharray="3 3" />`;
});
candles.forEach((c, i) => {
  const x = 281 + i * 8;
  plot += `<rect x="${x}" y="${c[0]}" width="1" height="${c[3] - c[0]}" fill="#0f0" />`;
  if (c[2] - c[1] < 3) {
    plot += `<rect x="${x - 2}" y="${c[1]}" width="5" height="${c[2] - c[1]}" fill="#0f0" />`;
  } else {
    plot += `<rect x="${x - 1.5}" y="${c[1] + 0.5}" width="4" height="${c[2] - c[1] - 1}" fill="${c[4] ? "#fff" : "#000"}" stroke="#0f0" />`;
  }
});
// trades
plot += `
  <path d="M474 290L717 114" stroke="#00f" stroke-dasharray="3 4" />
  <path d="M722 113L873 288" stroke="#00f" stroke-dasharray="4 4" />
  <path d="M721 116L873 290" stroke="#f00" stroke-dasharray="4 4" />
  <path d="M874 289L1392 393" stroke="#f00" stroke-dasharray="3 3" />
  <path d="M470 116.500h7M718 291.500h7M870 463.500h7" stroke="#00f" />
  <path d="M718 288.500h7M870 112.500h7" stroke="#f00" />
  <path d="M1163 79h11l-5.500 5z" fill="#808080" />`;
// trade marker with a white outline
function arrow(x, y, color) {
  return `<path d="M${x - 3} ${y - 2}h3v-2.500l5 4.500-5 4.500v-2.500h-3z" fill="${color}" stroke="#fff" />`;
}
plot += arrow(470, 291.5, "#00f") + arrow(719, 112.5, "#00f") + arrow(719, 116.5, "#f00");
plot += `<path d="M725.500 112v8l-4-4z" fill="#daa520" stroke="#fff" />`;
plot += arrow(870, 288.5, "#f00") + `<path d="M877.500 284.500v10l-5-5z" fill="#daa520" stroke="#fff" />`;
document.querySelector("#plot").innerHTML = plot;

const prices = ["1.37585", "1.37490", "1.37395", "1.37300", "1.37205", "1.37110", "1.37015", "1.36920", "1.36825", "1.36730", "1.36635", "1.36540"];
document.querySelector("#prices").innerHTML = prices.map((p) => `<span>${p}</span>`).join("");

const times = ["29 Jan 2021", "29 Jan 20:00", "29 Jan 22:00", "1 Feb 00:00", "1 Feb 02:00", "1 Feb 04:00", "1 Feb 06:00", "1 Feb 08:00", "1 Feb 10:00", "1 Feb 12:00", "1 Feb 14:00", "1 Feb 16:00", "1 Feb 18:00", "1 Feb 20:00", "1 Feb 22:00", "2 Feb 00:00", "2 Feb 02:00", "2 Feb 04:00"];
document.querySelector("#times").innerHTML = times.map((t) => `<span>${t}</span>`).join("");

// market watch
const quotes = [
  ["EURUSD", "1.21186", "1.21194", "up"],
  ["GBPUSD", "1.41053", "1.41063", "up"],
  ["USDJPY", "106.056", "106.066", "down"],
  ["USDCHF", "0.90892", "0.90907", "up"],
  ["USDCAD", "1.25592", "1.25608", "down"],
  ["AUDUSD", "0.79138", "0.79147", "up fresh"],
  ["NZDUSD", "0.73761", "0.73782", "up fresh"]
];
document.querySelector("#quotes").innerHTML = quotes.map((q) => {
  const dir = q[3].split(" ")[0];
  const cls = (dir == "down" ? "falling " : "") + (q[3].includes("fresh") ? "fresh" : "");
  return `<tr class="${cls}"><td class="name"><svg width="11" height="11"><use href="#${dir}" /></svg>${q[0]}</td><td>${q[1]}</td><td>${q[2]}</td></tr>`;
}).join("");

// navigator
const indicators = ["Spudsstochastic", "ssl-channel-chart-alert-indicator", "Stochastic", "Super_trend_hull", "superprofit0", "Support and Resistance Breakout A", "target-bands-indicator-new", "TC.Adaptive.Candlesticks", "TC.ADC.ChartPriceMark", "TC.ADC.Lines", ""];
document.querySelector("#tree").innerHTML = indicators.map((name, i) => {
  const grey = i > 6 ? `<path class="gem-over" d="M11.500 8.500l3.500 3.500-3.500 3.500L8 12z" />` : "";
  return `<li><svg viewBox="0 0 16 16"><use href="#fx" width="16" height="16" />${grey}</svg>${name}</li>`;
}).join("");

// tester results
const results = [
  ["doc buy", "2021.02.01 00:05", "buy", "1", "1.37027", "1.36527", "1.37527", "", ""],
  ["box-up", "2021.02.01 07:56", "t/p", "1", "1.37527", "1.36527", "1.37527", "41.24", "10041.24"],
  ["doc buy", "2021.02.01 07:56", "buy", "2", "1.37537", "1.37037", "1.38037", "", ""],
  ["doc sell", "2021.02.01 07:56", "sell", "3", "1.37527", "1.38027", "1.37027", "", ""],
  ["box-down", "2021.02.01 12:33", "s/l", "2", "1.37037", "1.37037", "1.38037", "-41.25", "9999.99"],
  ["doc sell", "2021.02.01 12:33", "sell", "4", "1.37037", "1.37537", "1.36537", "", ""],
  ["box-up", "2021.02.01 12:34", "t/p", "3", "1.37027", "1.38027", "1.37027", "41.24", "10041.23"],
  ["box-up", "2021.02.02 15:36", "t/p", "4", "1.36537", "1.37537", "1.36537", "40.93", "10082.16"],
  ["doc buy", "2021.02.02 15:36", "buy", "5", "1.36537", "1.36037", "1.37037", "", ""],
  ["box-down", "2021.02.03 23:58", "close at stop", "5", "1.36417", "1.36037", "1.37037", "-10.29", "10071.87"]
];
document.querySelector("#results").innerHTML = results.map((r, i) => {
  const [icon, cls = ""] = r[0].split(" ");
  return `<tr><td><div class="id"><svg class="${cls}" width="15" height="16"><use href="#${icon}" /></svg>${i + 1}</div></td><td>${r[1]}</td><td class="type">${r[2]}</td><td>${r[3]}</td><td>0.10</td><td>${r[4]}</td><td>${r[5]}</td><td>${r[6]}</td><td>${r[7]}</td><td>${r[8]}</td></tr>`;
}).join("");

// connection bars
let bars = "";
for (let i = 0; i < 8; i++) {
  bars += `<path d="M${i * 3} 0h2v${9 - i}h-2z" fill="#6b8000" /><path d="M${i * 3} ${10 - i}h2V13h-2z" fill="#0c4560" />`;
}
document.querySelector("#signal").innerHTML = bars;
```
